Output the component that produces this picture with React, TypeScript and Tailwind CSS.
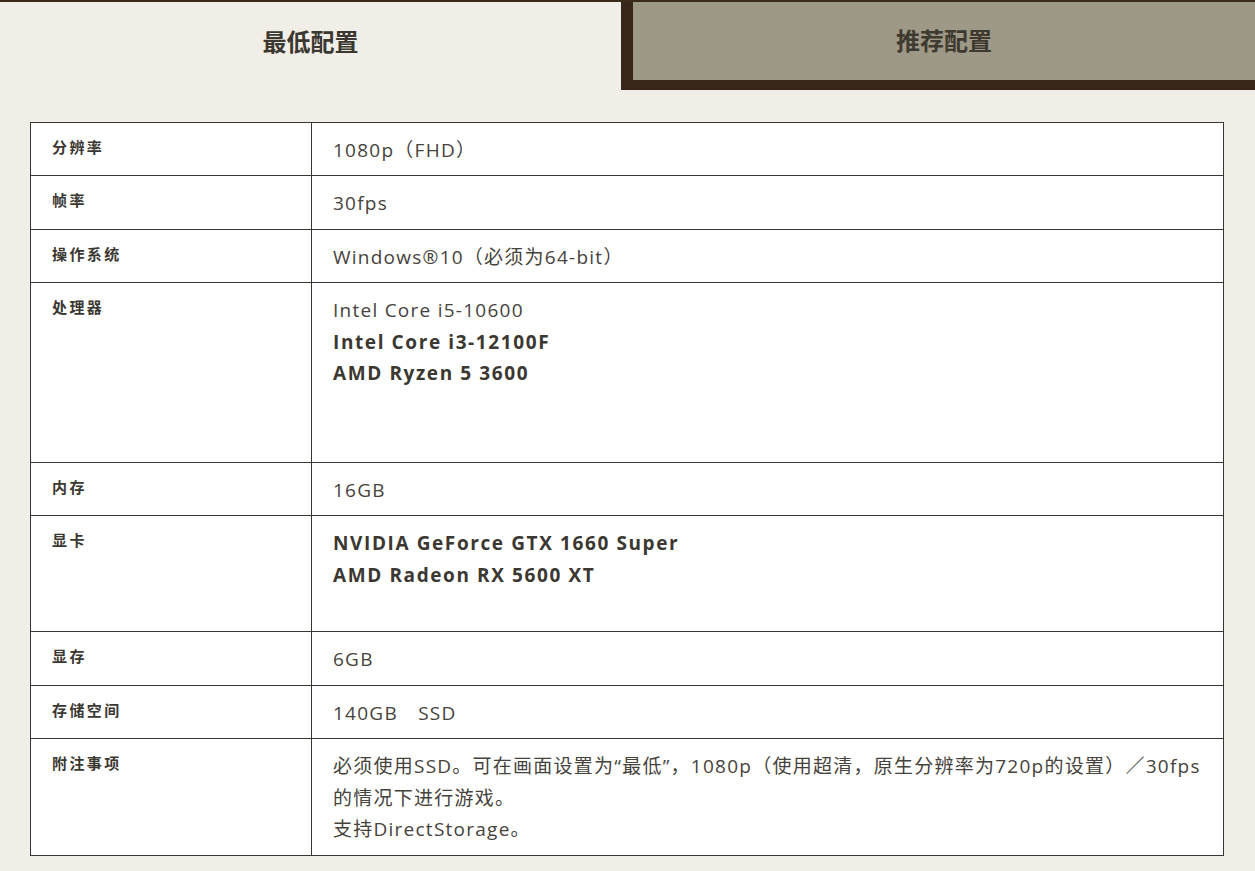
const font = { fontFamily: '"Open Sans", "Noto Sans CJK SC", sans-serif' };

type Row = { label: string; lines: Array<{ text: string; bold?: boolean }> };

const rows: Row[] = [
  { label: '分辨率', lines: [{ text: '1080p（FHD）' }] },
  { label: '帧率', lines: [{ text: '30fps' }] },
  { label: '操作系统', lines: [{ text: 'Windows®10（必须为64-bit）' }] },
  {
    label: '处理器',
    lines: [
      { text: 'Intel Core i5-10600' },
      { text: 'Intel Core i3-12100F', bold: true },
      { text: 'AMD Ryzen 5 3600', bold: true },
      { text: '' },
      { text: '' },
    ],
  },
  { label: '内存', lines: [{ text: '16GB' }] },
  {
    label: '显卡',
    lines: [
      { text: 'NVIDIA GeForce GTX 1660 Super', bold: true },
      { text: 'AMD Radeon RX 5600 XT', bold: true },
      { text: '' },
    ],
  },
  { label: '显存', lines: [{ text: '6GB' }] },
  { label: '存储空间', lines: [{ text: '140GB\u3000SSD' }] },
  {
    label: '附注事项',
    lines: [
      { text: '必须使用SSD。可在画面设置为“最低”，1080p（使用超清，原生分辨率为720p的设置）／30fps' },
      { text: '的情况下进行游戏。' },
      { text: '支持DirectStorage。' },
    ],
  },
];

export default function App() {
  return (
    <div className="min-h-[871px] bg-[#f1eee8] text-[#3b3731]" style={font}>
      <div className="flex border-t-2 border-[#3a2a18]">
        <div className="flex h-[88px] w-[621px] items-center justify-center pb-[8px] text-[24px] font-bold">
          最低配置
        </div>
        <div className="flex h-[88px] flex-1 items-center justify-center border-b-[10px] border-l-[12px] border-[#36271a] bg-[#9e9886] text-[24px] font-bold text-[#3f3a30]">
          推荐配置
        </div>
      </div>

      <div className="px-[30px] pt-[32px] pb-[16px]">
        <table className="w-[1194px] border-collapse bg-white">
          <tbody>
            {rows.map((row) => (
              <tr key={row.label}>
                <th className="w-[281px] border border-[#3a3631] px-[21px] pt-[12px] pb-[8px] text-left align-top text-[15px] leading-[24px] font-bold tracking-[2.4px]">
                  {row.label}
                </th>
                <td className="border border-[#3a3631] px-[21px] pt-[12px] pb-[9px] align-top text-[19px] leading-[31.45px] tracking-[1.25px] text-[#46423c]">
                  {row.lines.map((line, i) => (
                    <div key={i} className={line.bold ? 'font-bold tracking-[1.6px] text-[#3b3731]' : ''}>
                      {line.text || '\u00a0'}
                    </div>
                  ))}
                </td>
              </tr>
            ))}
          </tbody>
        </table>
      </div>
    </div>
  );
}
